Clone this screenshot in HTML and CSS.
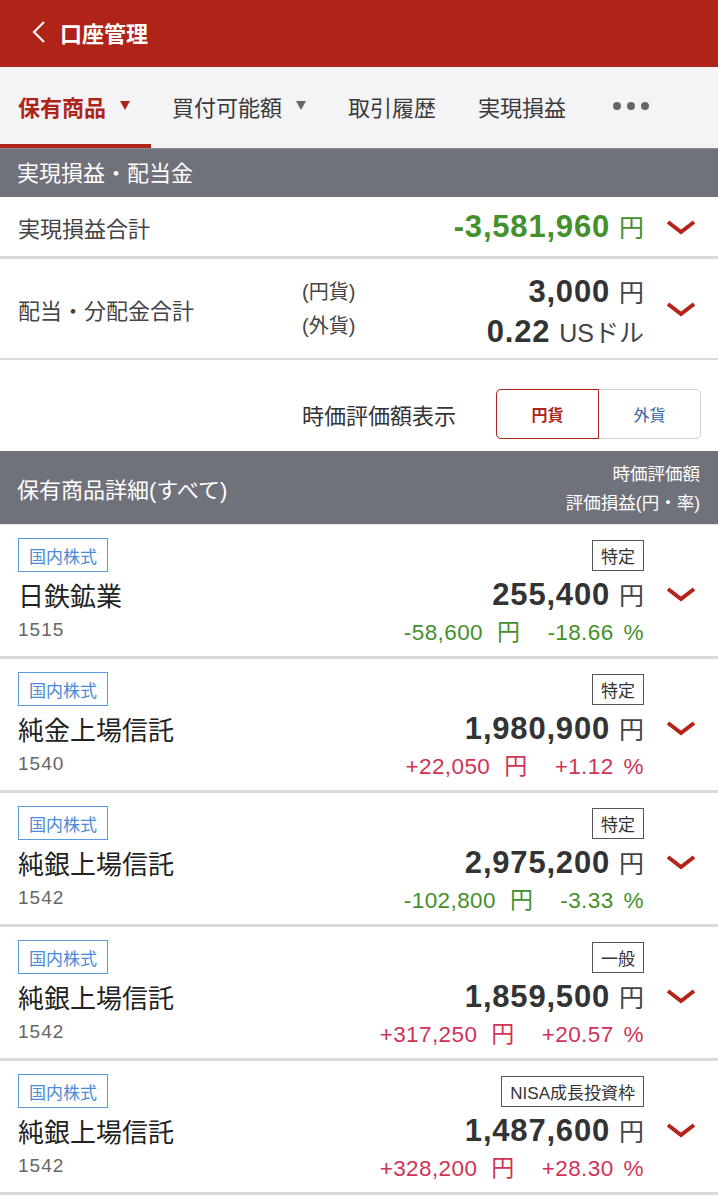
FILE: index.html
```html
<!DOCTYPE html>
<html>
<head>
    <meta charset="utf-8">
    <title>口座管理</title>
    <link rel="stylesheet" href="styles.css">
</head>
<body>
    <header class="topbar">
        <svg class="back" width="14" height="22" viewBox="0 0 14 22"><polyline points="12,1 2,11 12,21" fill="none" stroke="#fff" stroke-width="2.2"/></svg>
        <span class="title">口座管理</span>
    </header>

    <nav class="tabs">
        <div class="tab active">保有商品<span class="tri"></span></div>
        <div class="tab">買付可能額<span class="tri"></span></div>
        <div class="tab">取引履歴</div>
        <div class="tab">実現損益</div>
        <div class="tab dots"><i></i><i></i><i></i></div>
    </nav>

    <div class="section">実現損益・配当金</div>

    <div class="row sum">
        <span class="label">実現損益合計</span>
        <span class="amount green"><b>-3,581,960</b><span class="unit">円</span></span>
        <svg class="chev" width="30" height="16" viewBox="0 0 30 16"><polyline points="2,3 15,13 28,3" fill="none" stroke="#b5231a" stroke-width="4"/></svg>
    </div>

    <div class="row dividend">
        <span class="label">配当・分配金合計</span>
        <div class="cur">
            <span>(円貨)</span>
            <span>(外貨)</span>
        </div>
        <div class="vals">
            <span class="amount"><b>3,000</b><span class="unit">円</span></span>
            <span class="amount"><b>0.22</b><span class="unit">USドル</span></span>
        </div>
        <svg class="chev" width="30" height="16" viewBox="0 0 30 16"><polyline points="2,3 15,13 28,3" fill="none" stroke="#b5231a" stroke-width="4"/></svg>
    </div>

    <div class="toggle-row">
        <span class="toggle-label">時価評価額表示</span>
        <div class="toggle">
            <span class="seg on">円貨</span>
            <span class="seg">外貨</span>
        </div>
    </div>

    <div class="section tall">
        <span>保有商品詳細(すべて)</span>
        <div class="sub">
            <span>時価評価額</span>
            <span>評価損益(円・率)</span>
        </div>
    </div>

    <div id="holdings"></div>

    <script>
        const holdings = [
            ['日鉄鉱業', '1515', '特定', '255,400', '-58,600', '-18.66', 'green'],
            ['純金上場信託', '1540', '特定', '1,980,900', '+22,050', '+1.12', 'red'],
            ['純銀上場信託', '1542', '特定', '2,975,200', '-102,800', '-3.33', 'green'],
            ['純銀上場信託', '1542', '一般', '1,859,500', '+317,250', '+20.57', 'red'],
            ['純銀上場信託', '1542', 'NISA成長投資枠', '1,487,600', '+328,200', '+28.30', 'red']
        ];

        const list = document.getElementById('holdings');
        holdings.forEach(h => {
            const card = document.createElement('div');
            card.className = 'card';
            card.innerHTML = `<span class="tag">国内株式</span>
                <span class="badge">${h[2]}</span>
                <span class="cell"></span>
                <span class="name">${h[0]}</span>
                <span class="amount value"><b>${h[3]}</b><span class="unit">円</span></span>
                <svg class="chev" width="30" height="16" viewBox="0 0 30 16"><polyline points="2,3 15,13 28,3" fill="none" stroke="#b5231a" stroke-width="4"/></svg>
                <span class="code">${h[1]}</span>
                <span class="change ${h[6]}">${h[4]}<span class="yen">円</span><span class="pct">${h[5]}</span><span class="pc">%</span></span>`;
            list.appendChild(card);
        });
    </script>
</body>
</html>
```

FILE: styles.css
```css
body {
    margin: 0;
    width: 718px;
    font-family: 'Liberation Sans', 'Noto Sans CJK JP', sans-serif;
    color: #333;
    background: #fff;
}

.topbar {
    height: 67px;
    background: #b02318;
    display: flex;
    align-items: center;
    padding: 0 0 4px 32px;
    box-sizing: border-box;
}

.topbar .back {
    margin-right: 14px;
}

.topbar .title {
    color: #fff;
    font-size: 22px;
    font-weight: bold;
}

.tabs {
    height: 82px;
    background: #f4f4f6;
    display: flex;
    border-bottom: 1px solid #8a8c94;
    box-sizing: border-box;
}

.tab {
    display: flex;
    align-items: center;
    padding: 0 21px;
    font-size: 22px;
    color: #3a3a3a;
    box-sizing: border-box;
    border-bottom: 4px solid transparent;
}

.tab.active {
    padding-left: 18px;
    color: #b02318;
    font-weight: bold;
    border-bottom-color: #b02318;
}

.tri {
    margin-left: 14px;
    border-left: 5px solid transparent;
    border-right: 5px solid transparent;
    border-top: 9px solid #666;
}

.tab.active .tri {
    border-top-color: #b02318;
}

.tab.dots {
    padding-left: 26px;
}

.dots i {
    width: 8px;
    height: 8px;
    border-radius: 50%;
    background: #666;
    margin-right: 6px;
}

.section {
    height: 48px;
    background: #6f717b;
    color: #fff;
    font-size: 22px;
    display: flex;
    align-items: center;
    padding: 0 18px 4px 17px;
    box-sizing: border-box;
}

.section.tall {
    height: 74px;
    padding-bottom: 0;
    justify-content: space-between;
    border-bottom: 1px solid #e2e2e6;
}

.section .sub {
    display: flex;
    flex-direction: column;
    align-items: flex-end;
    font-size: 17.5px;
    line-height: 29px;
    padding-top: 2px;
}

.row {
    display: flex;
    align-items: center;
    padding: 0 22px 0 18px;
    border-bottom: 3px solid #d9d9dc;
}

.row .label {
    font-size: 22px;
    color: #444;
}

.row.sum {
    height: 59px;
}

.row.sum .amount {
    margin-left: auto;
}

.row.dividend {
    height: 99px;
    border-bottom-width: 2px;
}

.row.dividend .label {
    width: 284px;
}

.cur {
    display: flex;
    flex-direction: column;
    font-size: 20px;
    line-height: 34px;
    color: #444;
}

.vals {
    margin-left: auto;
    display: flex;
    flex-direction: column;
    align-items: flex-end;
    padding-top: 7px;
}

.vals .amount {
    height: 40px;
    line-height: 40px;
}

.chev {
    margin-left: 22px;
}

.amount b {
    font-size: 31px;
    letter-spacing: 0.8px;
    color: #333;
}

.amount .unit {
    font-size: 25px;
    margin-left: 9px;
    color: #444;
}

.amount.green b,
.amount.green .unit,
.green {
    color: #43902c;
}

.red {
    color: #d03355;
}

.toggle-row {
    height: 91px;
    display: flex;
    align-items: center;
    padding: 16px 17px 0 302px;
    box-sizing: border-box;
}

.toggle-label {
    font-size: 22px;
    color: #333;
}

.toggle {
    margin-left: auto;
    display: flex;
    width: 205px;
    height: 50px;
    border: 1px solid #d0d0d4;
    border-radius: 5px;
    box-sizing: border-box;
    font-size: 16px;
}

.seg {
    flex: 1;
    display: flex;
    align-items: center;
    justify-content: center;
    color: #2f5fa5;
}

.seg.on {
    margin: -1px 0 -1px -1px;
    border: 1.5px solid #b02318;
    border-radius: 5px 0 0 5px;
    color: #b02318;
    font-weight: bold;
}

.card {
    display: grid;
    grid-template-columns: 1fr auto 52px;
    grid-template-rows: 34px 44px 28px;
    align-items: center;
    padding: 13px 22px 12px 18px;
    border-bottom: 3px solid #d9d9dc;
}

.tag {
    justify-self: start;
    height: 34px;
    box-sizing: border-box;
    border: 1.5px solid #5b9be0;
    color: #4a8ad6;
    font-size: 17px;
    padding: 0 10px;
    display: flex;
    align-items: center;
}

.badge {
    justify-self: end;
    height: 31px;
    box-sizing: border-box;
    border: 1.5px solid #555;
    color: #333;
    font-size: 17px;
    padding: 0 8px;
    display: flex;
    align-items: center;
}

.name {
    font-size: 26px;
    color: #222;
}

.value {
    justify-self: end;
}

.card .chev {
    justify-self: end;
    margin: 0;
}

.code {
    font-size: 19px;
    letter-spacing: 1px;
    color: #666;
}

.change {
    justify-self: end;
    font-size: 22.5px;
    letter-spacing: 0.4px;
}

.change .yen {
    font-size: 23px;
    margin-left: 14px;
}

.change .pct {
    margin-left: 27px;
}

.change .pc {
    margin-left: 10px;
}
```
